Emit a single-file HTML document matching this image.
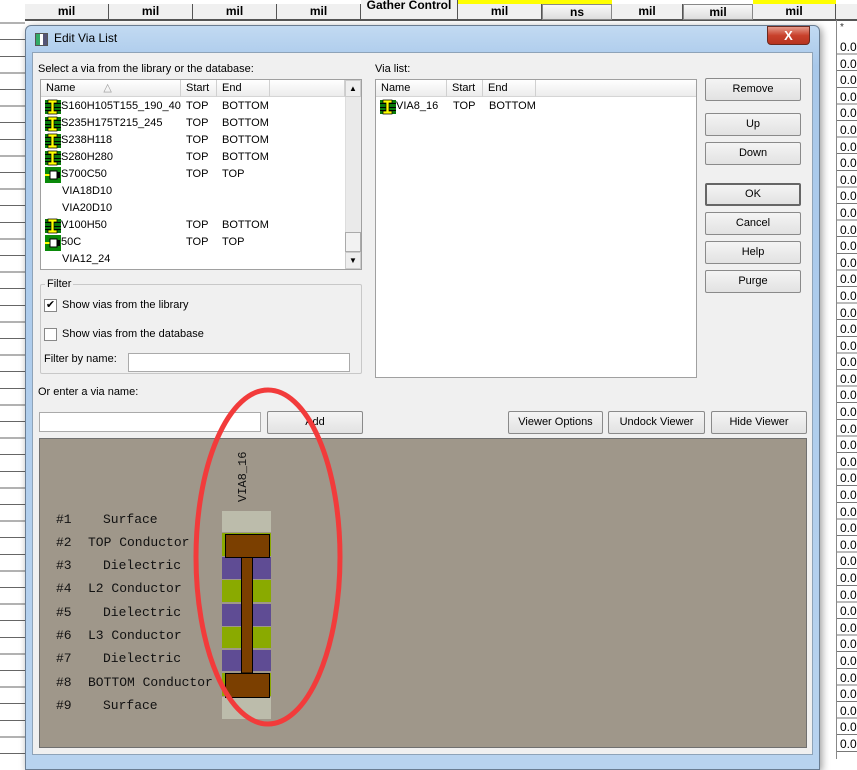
<!DOCTYPE html>
<html><head><meta charset="utf-8"><style>
*{box-sizing:border-box}
body{margin:0;width:857px;height:759px;overflow:hidden;background:#fff;position:relative;font-family:"Liberation Sans",sans-serif;font-size:11px;color:#000}
.a{position:absolute}
.hc{position:absolute;top:4px;height:16px;border-right:1px solid #555;border-bottom:1px solid #555;background:#f0f0f0;font-weight:bold;font-size:12px;text-align:center;line-height:15px}
.btn{position:absolute;background:linear-gradient(#f4f4f4,#e2e2e2);border:1px solid #8a8a8a;border-radius:2px;text-align:center;font-size:11px;line-height:21px;height:23px}
.lv{position:absolute;background:#fff;border:1px solid #a0a0a0}
.hd{position:absolute;top:0;height:17px;background:linear-gradient(#fff,#ececec);border-right:1px solid #d0d0d0;border-bottom:1px solid #d5d5d5;line-height:16px;padding-left:5px}
.row{position:absolute;height:17px;line-height:17px;white-space:nowrap;display:flex;align-items:center}
.row svg{flex:none}
.mono{font-family:"Liberation Mono",monospace;font-size:13px;position:absolute;color:#111}
</style></head><body>
<svg width="0" height="0" style="position:absolute">
<defs>
<symbol id="v1" viewBox="0 0 16 16"><rect x="0" y="1" width="16" height="14" fill="#0a7a0a"/><rect x="0" y="4" width="16" height="1" fill="#000"/><rect x="0" y="8" width="16" height="1" fill="#000"/><rect x="0" y="11" width="16" height="1" fill="#000"/><path d="M3 1h9v3h-3v8h3v3H3v-3h3V4H3z" fill="#ff0" stroke="#000" stroke-width=".7"/></symbol>
<symbol id="v2" viewBox="0 0 16 16"><rect x="0" y="0" width="16" height="16" fill="#0a8a0a"/><rect x="0" y="7" width="5" height="2" fill="#ff0"/><rect x="5" y="4" width="7" height="8" fill="#fff" stroke="#000"/><rect x="12" y="5" width="3" height="6" fill="#000"/></symbol>
</defs></svg>

<div class="a" style="left:458px;top:0;width:154px;height:5px;background:#ff0"></div>
<div class="a" style="left:753px;top:0;width:83px;height:5px;background:#ff0"></div>
<div class="hc" style="left:0;top:-10px;width:25px;height:18px;text-align:right;padding-right:2px;line-height:24px">Set</div>
<div class="hc" style="left:25px;width:84px">mil</div>
<div class="hc" style="left:109px;width:84px">mil</div>
<div class="hc" style="left:193px;width:84px">mil</div>
<div class="hc" style="left:277px;width:84px">mil</div>
<div class="hc" style="left:361px;top:-4px;width:97px;height:24px;line-height:18px">Gather Control</div>
<div class="hc" style="left:458px;width:84px">mil</div>
<div class="hc" style="left:542px;width:70px;border:1px solid #888;background:linear-gradient(#f8f8f8,#ddd)">ns</div>
<div class="hc" style="left:612px;width:71px">mil</div>
<div class="hc" style="left:683px;width:70px;border:1px solid #888;background:linear-gradient(#f8f8f8,#ddd)">mil</div>
<div class="hc" style="left:753px;width:83px">mil</div>
<div class="hc" style="left:836px;width:30px"></div>
<div class="a" style="left:0;top:20px;width:857px;height:1px;background:#555"></div>
<div class="a" style="left:836px;top:20px;width:1px;height:739px;background:#888"></div>
<div class="a" style="left:0;top:0;width:25px;height:759px;background:repeating-linear-gradient(#fff 0,#fff 15.6px,#666 15.6px,#666 16.6px);background-position:0 7px"></div>
<div class="a" style="left:837px;top:38px;width:20px;height:721px;background:repeating-linear-gradient(#fff 0,#fff 15.6px,#777 15.6px,#777 16.6px)"></div>
<div class="a" style="left:840px;top:22px;font-size:10px;color:#333">*</div>
<div class="a" style="left:840px;top:39px;font-size:12px;line-height:16.6px;white-space:pre">0.0
0.0
0.0
0.0
0.0
0.0
0.0
0.0
0.0
0.0
0.0
0.0
0.0
0.0
0.0
0.0
0.0
0.0
0.0
0.0
0.0
0.0
0.0
0.0
0.0
0.0
0.0
0.0
0.0
0.0
0.0
0.0
0.0
0.0
0.0
0.0
0.0
0.0
0.0
0.0
0.0
0.0
0.0</div>

<div class="a" style="left:25px;top:25px;width:795px;height:745px;border:1px solid #6a7d92;border-radius:6px 6px 0 0;background:linear-gradient(#c2daf2,#a8c8ea 40px,#b8d3ef);box-shadow:2px 2px 8px rgba(0,0,0,.4)"></div>
<div class="a" style="left:35px;top:33px;width:13px;height:13px;border:1px solid #555;background:linear-gradient(90deg,#3a6 0,#3a6 35%,#fff 35%,#fff 65%,#557 65%)"></div>
<div class="a" style="left:54px;top:31px;font-size:12px;color:#000">Edit Via List</div>
<div class="a" style="left:767px;top:26px;width:43px;height:19px;border:1px solid #6b2a20;border-radius:0 0 4px 4px;background:linear-gradient(#e59a8a,#c8412c 50%,#b73420);color:#fff;font-weight:bold;font-size:13px;text-align:center;line-height:17px">X</div>
<div class="a" style="left:32px;top:52px;width:781px;height:703px;background:#f0f0f0;border:1px solid #8ea3b8"></div>

<div class="a" style="left:38px;top:63px">Select a via from the library or the database:</div>
<div class="lv" style="left:40px;top:79px;width:322px;height:191px;overflow:hidden">
 <div class="hd" style="left:0;width:140px">Name <span style="margin-left:25px;color:#999">△</span></div>
 <div class="hd" style="left:140px;width:36px">Start</div>
 <div class="hd" style="left:176px;width:53px">End</div>
 <div class="hd" style="left:229px;width:75px"></div>
 <div class="a" style="left:304px;top:0;width:16px;height:189px;background:#eaeaea;border-left:1px solid #ddd"></div>
 <div class="a" style="left:304px;top:0;width:16px;height:17px;background:#eee;border:1px solid #ccc;font-size:8px;text-align:center;line-height:16px">▲</div>
 <div class="a" style="left:304px;top:152px;width:16px;height:20px;background:#f2f2f2;border:1px solid #aaa"></div>
 <div class="a" style="left:304px;top:172px;width:16px;height:17px;background:#eee;border:1px solid #ccc;font-size:8px;text-align:center;line-height:16px">▼</div>
 <div class="row" style="top:18px;left:4px"><svg width="16" height="16"><use href="#v1"/></svg>S160H105T155_190_40</div>
 <div class="row" style="top:35px;left:4px"><svg width="16" height="16"><use href="#v1"/></svg>S235H175T215_245</div>
 <div class="row" style="top:52px;left:4px"><svg width="16" height="16"><use href="#v1"/></svg>S238H118</div>
 <div class="row" style="top:69px;left:4px"><svg width="16" height="16"><use href="#v1"/></svg>S280H280</div>
 <div class="row" style="top:86px;left:4px"><svg width="16" height="16"><use href="#v2"/></svg>S700C50</div>
 <div class="row" style="top:103px;left:21px">VIA18D10</div>
 <div class="row" style="top:120px;left:21px">VIA20D10</div>
 <div class="row" style="top:137px;left:4px"><svg width="16" height="16"><use href="#v1"/></svg>V100H50</div>
 <div class="row" style="top:154px;left:4px"><svg width="16" height="16"><use href="#v2"/></svg>50C</div>
 <div class="row" style="top:171px;left:21px">VIA12_24</div>
 <div class="a" style="top:18px;left:145px;line-height:17px">TOP<br>TOP<br>TOP<br>TOP<br>TOP<br><br><br>TOP<br>TOP</div>
 <div class="a" style="top:18px;left:181px;line-height:17px">BOTTOM<br>BOTTOM<br>BOTTOM<br>BOTTOM<br>TOP<br><br><br>BOTTOM<br>TOP</div>
</div>

<div class="a" style="left:40px;top:284px;width:322px;height:90px;border:1px solid #c8c8c8;border-radius:2px"></div>
<div class="a" style="left:45px;top:278px;background:#f0f0f0;padding:0 2px">Filter</div>
<div class="a" style="left:44px;top:299px;width:13px;height:13px;border:1px solid #888;background:#fff;font-size:11px;line-height:11px;text-align:center">✔</div>
<div class="a" style="left:62px;top:299px">Show vias from the library</div>
<div class="a" style="left:44px;top:328px;width:13px;height:13px;border:1px solid #888;background:#fff"></div>
<div class="a" style="left:62px;top:328px">Show vias from the database</div>
<div class="a" style="left:44px;top:353px">Filter by name:</div>
<div class="a" style="left:128px;top:353px;width:222px;height:19px;border:1px solid #aaa;background:#fff"></div>

<div class="a" style="left:375px;top:63px">Via list:</div>
<div class="lv" style="left:375px;top:79px;width:322px;height:299px;overflow:hidden">
 <div class="hd" style="left:0;width:71px">Name</div>
 <div class="hd" style="left:71px;width:36px">Start</div>
 <div class="hd" style="left:107px;width:53px">End</div>
 <div class="hd" style="left:160px;width:162px"></div>
 <div class="row" style="top:18px;left:4px"><svg width="16" height="16"><use href="#v1"/></svg>VIA8_16</div>
 <div class="row" style="top:18px;left:77px">TOP</div>
 <div class="row" style="top:18px;left:113px">BOTTOM</div>
</div>

<div class="btn" style="left:705px;top:78px;width:96px">Remove</div>
<div class="btn" style="left:705px;top:113px;width:96px">Up</div>
<div class="btn" style="left:705px;top:142px;width:96px">Down</div>
<div class="btn" style="left:705px;top:183px;width:96px;border:2px solid #666;line-height:19px">OK</div>
<div class="btn" style="left:705px;top:212px;width:96px">Cancel</div>
<div class="btn" style="left:705px;top:241px;width:96px">Help</div>
<div class="btn" style="left:705px;top:270px;width:96px">Purge</div>

<div class="a" style="left:38px;top:386px">Or enter a via name:</div>
<div class="a" style="left:39px;top:412px;width:222px;height:20px;border:1px solid #aaa;background:#fff"></div>
<div class="btn" style="left:267px;top:411px;width:96px">Add</div>
<div class="btn" style="left:508px;top:411px;width:95px">Viewer Options</div>
<div class="btn" style="left:608px;top:411px;width:97px">Undock Viewer</div>
<div class="btn" style="left:711px;top:411px;width:96px">Hide Viewer</div>

<div class="a" style="left:39px;top:438px;width:768px;height:310px;background:#9f978a;border:1px solid #707070"></div>
<div class="mono" style="left:236px;top:502px;transform:rotate(-90deg);transform-origin:0 0;font-size:12px">VIA8_16</div>
<div class="mono" style="left:56px;top:512px">#1</div><div class="mono" style="left:103px;top:512px">Surface</div>
<div class="mono" style="left:56px;top:535px">#2</div><div class="mono" style="left:88px;top:535px">TOP Conductor</div>
<div class="mono" style="left:56px;top:558px">#3</div><div class="mono" style="left:103px;top:558px">Dielectric</div>
<div class="mono" style="left:56px;top:581px">#4</div><div class="mono" style="left:88px;top:581px">L2 Conductor</div>
<div class="mono" style="left:56px;top:605px">#5</div><div class="mono" style="left:103px;top:605px">Dielectric</div>
<div class="mono" style="left:56px;top:628px">#6</div><div class="mono" style="left:88px;top:628px">L3 Conductor</div>
<div class="mono" style="left:56px;top:651px">#7</div><div class="mono" style="left:103px;top:651px">Dielectric</div>
<div class="mono" style="left:56px;top:675px">#8</div><div class="mono" style="left:88px;top:675px">BOTTOM Conductor</div>
<div class="mono" style="left:56px;top:698px">#9</div><div class="mono" style="left:103px;top:698px">Surface</div>
<svg class="a" style="left:0;top:0" width="857" height="759">
<rect x="222" y="511" width="49" height="21" fill="#bcbcab"/>
<rect x="222" y="533" width="49" height="23" fill="#8aaa00"/>
<rect x="222" y="557" width="49" height="22" fill="#5f4c94"/>
<rect x="222" y="580" width="49" height="22" fill="#8aaa00"/>
<rect x="222" y="604" width="49" height="22" fill="#5f4c94"/>
<rect x="222" y="627" width="49" height="21" fill="#8aaa00"/>
<rect x="222" y="650" width="49" height="21" fill="#5f4c94"/>
<rect x="222" y="673" width="49" height="23" fill="#8aaa00"/>
<rect x="222" y="697" width="49" height="22" fill="#bcbcab"/>
<rect x="241.5" y="557" width="11" height="116" fill="#7b3f00" stroke="#000"/>
<rect x="225.5" y="534.5" width="44" height="23" fill="#7b3f00" stroke="#000"/>
<rect x="225.5" y="673.5" width="44" height="24" fill="#7b3f00" stroke="#000"/>
<ellipse cx="268" cy="557" rx="72" ry="167" fill="none" stroke="#f23b3b" stroke-width="5"/>
</svg>
</body></html>
